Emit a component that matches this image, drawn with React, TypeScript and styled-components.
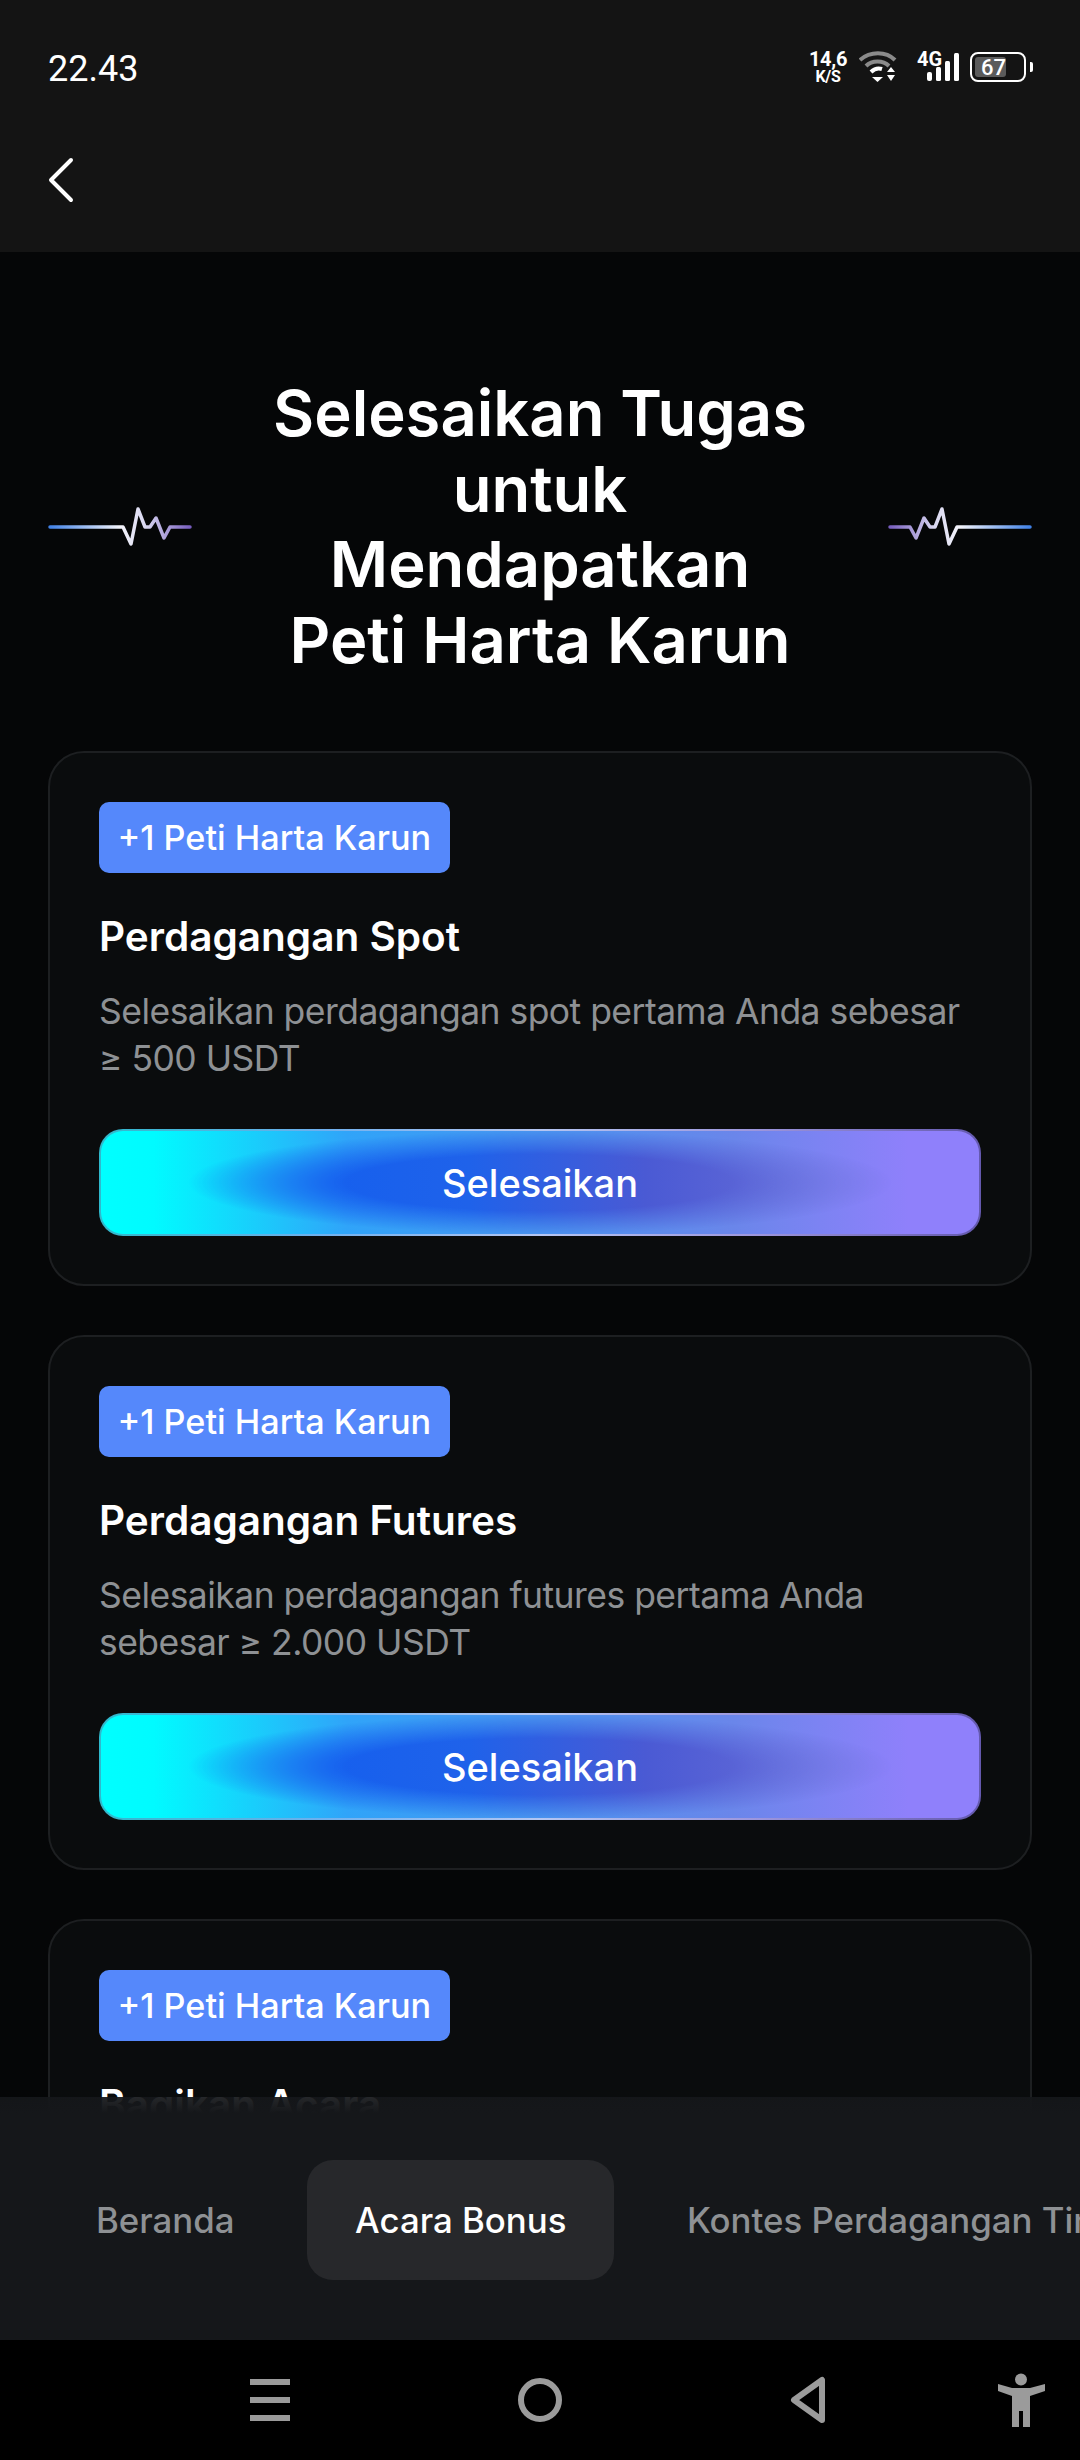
import styled, { createGlobalStyle } from "styled-components";

const GlobalStyle = createGlobalStyle`
  * { box-sizing: border-box; }
  html, body { margin: 0; padding: 0; background: #050607; }
  body { font-family: Inter, "Noto Sans", sans-serif; }
`;

const Page = styled.div`
  width: 1080px;
  height: 2460px;
  display: flex;
  flex-direction: column;
  overflow: hidden;
  background: #050607;
`;
const Header = styled.header`
  height: 252px;
  flex: none;
  background: #141414;
  padding: 0 48px;
  color: #fff;
`;
const StatusBar = styled.div`
  height: 157px;
  display: flex;
  justify-content: space-between;
  align-items: flex-start;
  padding-top: 46px;
`;
const Time = styled.span`
  font-family: Roboto, sans-serif;
  font-size: 36px;
  line-height: 46px;
`;
const StatusIcons = styled.div`
  display: flex;
  align-items: center;
  height: 36px;
  margin-top: 3px;
  padding-right: 6px;
`;
const NetSpeed = styled.div`
  width: 38px;
  margin-right: 12px;
  display: flex;
  flex-direction: column;
  align-items: center;
  font-family: Roboto, sans-serif;
  font-weight: 700;
  font-size: 20px;
  line-height: 20px;
  letter-spacing: -0.3px;
  span + span {
    font-size: 16px;
    line-height: 16px;
  }
`;
const Battery = styled.div`
  position: relative;
  width: 56px;
  height: 30px;
  margin-left: 10px;
  border: 2.5px solid #fff;
  border-radius: 8px;
  padding: 3px;
  &::after {
    content: "";
    position: absolute;
    right: -9px;
    top: 8px;
    width: 3px;
    height: 10px;
    background: #fff;
    border-radius: 0 2px 2px 0;
  }
`;
const BatteryFill = styled.div`
  height: 100%;
  background: #5b5b5b;
  border-radius: 3px;
  display: flex;
  align-items: center;
  justify-content: center;
  font-family: Roboto, sans-serif;
  font-size: 22px;
  font-weight: 500;
  padding-left: 6px;
`;
const SignalIcon = styled.svg`
  margin-left: 19px;
  overflow: visible;
`;
const BackButton = styled.button`
  display: block;
  background: none;
  border: 0;
  padding: 0;
  height: 46px;
`;
const Main = styled.main`
  flex: 1;
  min-height: 0;
  overflow: hidden;
  padding: 0 48px;
  margin-bottom: -16px;
`;
const Hero = styled.div`
  display: flex;
  justify-content: space-between;
  align-items: center;
  padding-top: 124px;
  margin-bottom: 73px;
`;
const WaveIcon = styled.svg<{ $flip?: boolean }>`
  transform: ${(props) => (props.$flip ? "scaleX(-1)" : "none")};
`;
const Title = styled.h1`
  margin: 0;
  color: #fff;
  font-size: 63.3px;
  line-height: 75.6px;
  font-weight: 600;
  text-align: center;
`;
const CardList = styled.div`
  display: flex;
  flex-direction: column;
  gap: 49px;
`;
const Card = styled.section`
  background: #0a0c0d;
  border: 2px solid #1d1f21;
  border-radius: 36px;
  padding: 49px 49px 48px;
`;
const Tag = styled.span`
  display: inline-flex;
  align-items: center;
  height: 71px;
  padding: 0 18.500px;
  background: #5588fb;
  color: #fff;
  border-radius: 10px;
  font-size: 34.2px;
  font-weight: 500;
`;
const CardTitle = styled.h2`
  margin: 34px 0 0;
  color: #fff;
  font-size: 40.5px;
  line-height: 60px;
  font-weight: 600;
`;
const CardText = styled.p`
  margin: 21px 0 0;
  color: #8e9194;
  font-size: 35.5px;
  letter-spacing: -0.53px;
  line-height: 47px;
`;
const ActionButton = styled.button`
  position: relative;
  display: block;
  width: 100%;
  height: 107px;
  margin-top: 47px;
  border: 2.5px solid transparent;
  border-radius: 24px;
  color: #fff;
  font-family: inherit;
  font-size: 38px;
  font-weight: 500;
  background:
    linear-gradient(90deg, #00ffff 0%, #00fbff 6%, #30a4f9 28%, #4a93ef 50%, #6a86ea 72%, #8f80fb 92%, #8f80fb 100%) padding-box,
    linear-gradient(90deg, #2fb9cc 0%, #6eb0ee 25%, #b5c6f2 50%, #9c95dc 75%, #6459ae 100%) border-box;
  /* dark glow through the middle of the button */
  &::before {
    content: "";
    position: absolute;
    inset: 0;
    border-radius: 22px;
    background: linear-gradient(90deg, #1660ee 26%, #1f62ea 42%, #4a5ad4 62%, #6a6ed8 84%);
    mask-image: radial-gradient(ellipse 40% 50% at 50% 50%, #000 55%, transparent 100%);
  }
  span {
    position: relative;
  }
`;
const TabBar = styled.nav`
  position: relative;
  height: 243px;
  flex: none;
  background: linear-gradient(rgba(21, 23, 26, 0.93), #15171a 16px);
  display: flex;
  gap: 24.500px;
  padding: 63px 0 0 48px;
  overflow: hidden;
`;
const Tab = styled.div<{ $active?: boolean }>`
  flex: none;
  height: 120px;
  padding: 0 48px;
  border-radius: 26px;
  display: flex;
  align-items: center;
  white-space: nowrap;
  font-size: 34.8px;
  font-weight: 500;
  color: ${(props) => (props.$active ? "#fff" : "#8e9194")};
  background: ${(props) => (props.$active ? "#27282b" : "transparent")};
`;
const NavBar = styled.div`
  height: 120px;
  flex: none;
  background: #000;
`;
const NavIcons = styled.svg`
  display: block;
`;

const tasks = [
  {
    title: "Perdagangan Spot",
    text: (
      <>
        Selesaikan perdagangan spot pertama Anda sebesar
        <br />≥ 500 USDT
      </>
    ),
  },
  {
    title: "Perdagangan Futures",
    text: (
      <>
        Selesaikan perdagangan futures pertama Anda
        <br />
        sebesar ≥ 2.000 USDT
      </>
    ),
  },
  { title: "Bagikan Acara" },
];

function Wave({ flip }: { flip?: boolean }) {
  const id = flip ? "waveRight" : "waveLeft";
  return (
    <WaveIcon $flip={flip} width="144" height="44" viewBox="0 0 144 44" fill="none">
      <defs>
        <linearGradient id={id} gradientUnits="userSpaceOnUse" x1="0" y1="0" x2="144" y2="0">
          <stop offset="0" stopColor="#3d7fe6" />
          <stop offset="0.5" stopColor="#f4f4fb" />
          <stop offset="0.68" stopColor="#d8d6f0" />
          <stop offset="1" stopColor="#7459bd" />
        </linearGradient>
      </defs>
      <path
        d="M2 22H75L83 39L90 4L97 22H102L108 13L116 33L122 22H142"
        stroke={`url(#${id})`}
        strokeWidth="3.5"
        strokeLinecap="round"
        strokeLinejoin="round"
      />
    </WaveIcon>
  );
}

function Wifi() {
  return (
    <svg width="38" height="32" viewBox="0 0 38 32" fill="none">
      <path d="M1 9C11 0 27 0 36 9" stroke="#8a8a8a" strokeWidth="4" />
      <path d="M7 15C13 9 24 9 30 15" stroke="#8a8a8a" strokeWidth="4" />
      <path d="M12 21C15.500 17.500 20 17 23 18" stroke="#fff" strokeWidth="4" />
      <path d="M13 26H24L18.500 31Z" fill="#fff" />
      <path d="M32 16L36 21H28Z M28 24H36L32 30Z" fill="#fff" />
    </svg>
  );
}

function Signal() {
  return (
    <SignalIcon width="44" height="32" viewBox="0 0 44 32" fill="#fff">
      <text x="1" y="15" fontFamily="Roboto, sans-serif" fontWeight="700" fontSize="20">
        4G
      </text>
      <rect x="11" y="21" width="5" height="9" rx="2" />
      <rect x="20" y="16" width="5" height="14" rx="1.500" />
      <rect x="29" y="10" width="5" height="20" rx="1.500" />
      <rect x="38" y="2" width="5" height="28" rx="1.500" />
    </SignalIcon>
  );
}

export default function App() {
  return (
    <Page>
      <GlobalStyle />
      <Header>
        <StatusBar>
          <Time>22.43</Time>
          <StatusIcons>
            <NetSpeed>
              <span>14,6</span>
              <span>K/S</span>
            </NetSpeed>
            <Wifi />
            <Signal />
            <Battery>
              <BatteryFill style={{ width: "67%" }}>67</BatteryFill>
            </Battery>
          </StatusIcons>
        </StatusBar>
        <BackButton aria-label="Kembali">
          <svg width="26" height="46" viewBox="0 0 26 46" fill="none">
            <path d="M23 3L3 23L23 43" stroke="#fff" strokeWidth="4" strokeLinecap="round" strokeLinejoin="round" />
          </svg>
        </BackButton>
      </Header>
      <Main>
        <Hero>
          <Wave />
          <Title>
            Selesaikan Tugas
            <br />
            untuk
            <br />
            Mendapatkan
            <br />
            Peti Harta Karun
          </Title>
          <Wave flip />
        </Hero>
        <CardList>
          {tasks.map((task) => (
            <Card key={task.title}>
              <Tag>+1 Peti Harta Karun</Tag>
              <CardTitle>{task.title}</CardTitle>
              {task.text && (
                <>
                  <CardText>{task.text}</CardText>
                  <ActionButton>
                    <span>Selesaikan</span>
                  </ActionButton>
                </>
              )}
            </Card>
          ))}
        </CardList>
      </Main>
      <TabBar>
        <Tab>Beranda</Tab>
        <Tab $active>Acara Bonus</Tab>
        <Tab>Kontes Perdagangan Tim</Tab>
      </TabBar>
      <NavBar>
        <NavIcons width="1080" height="120" viewBox="0 2340 1080 120" fill="none">
          <path d="M250 2382H290M250 2400H290M250 2418H290" stroke="#9b9b9b" strokeWidth="6" />
          <circle cx="540" cy="2400" r="19" stroke="#9b9b9b" strokeWidth="6" />
          <path d="M822 2380V2420L794 2400Z" stroke="#9b9b9b" strokeWidth="6" strokeLinejoin="round" />
          <circle cx="1021" cy="2379.500" r="6" fill="#9b9b9b" />
          <path d="M998 2384L1012 2388H1030L1045 2384V2391L1030 2396V2427H1023V2411H1019V2427H1012V2396L998 2391Z" fill="#9b9b9b" />
        </NavIcons>
      </NavBar>
    </Page>
  );
}
